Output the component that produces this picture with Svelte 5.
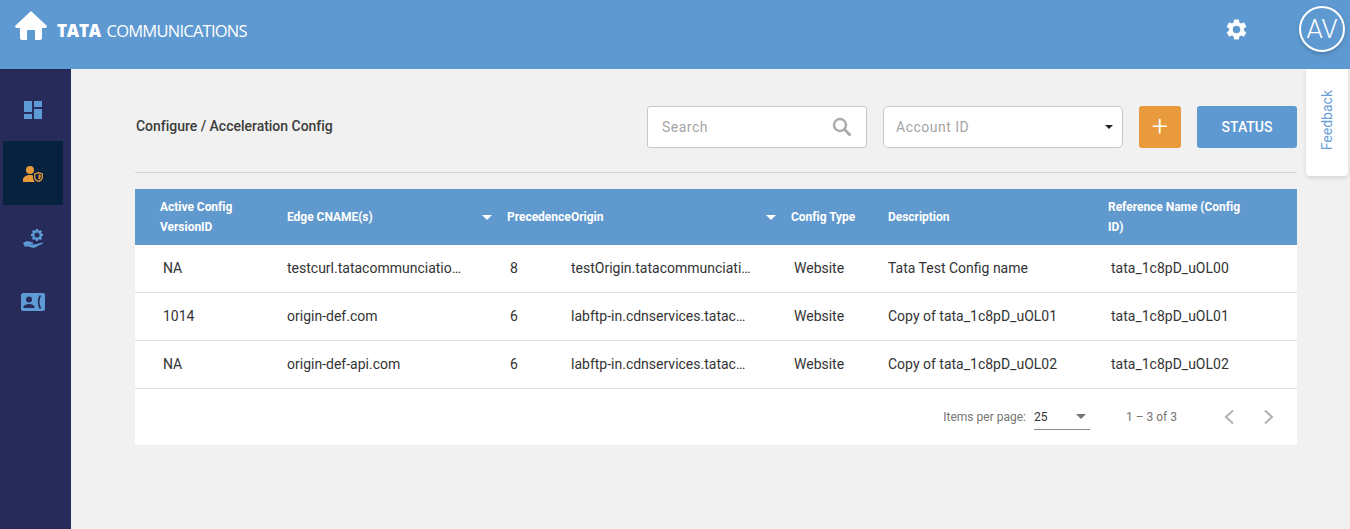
<script lang="ts">
	const rows = [
		{ version: 'NA', cname: 'testcurl.tatacommunciations.com', precedence: 8, origin: 'testOrigin.tatacommunciations.com', type: 'Website', description: 'Tata Test Config name', ref: 'tata_1c8pD_uOL00' },
		{ version: '1014', cname: 'origin-def.com', precedence: 6, origin: 'labftp-in.cdnservices.tatacommunications.com', type: 'Website', description: 'Copy of tata_1c8pD_uOL01', ref: 'tata_1c8pD_uOL01' },
		{ version: 'NA', cname: 'origin-def-api.com', precedence: 6, origin: 'labftp-in.cdnservices.tatacommunications.com', type: 'Website', description: 'Copy of tata_1c8pD_uOL02', ref: 'tata_1c8pD_uOL02' }
	];
</script>

<div class="page">
	<header class="topbar">
		<div class="brand">
			<svg class="home" viewBox="0 0 32 29" width="32" height="29">
				<path d="M16 0 L32 15 Q32 17 30 17 L27 17 L27 27 Q27 29 25 29 L20 29 L20 20 Q20 19 19 19 L13 19 Q12 19 12 20 L12 29 L7 29 Q5 29 5 27 L5 17 L2 17 Q0 17 0 15 Z" fill="#fff" />
			</svg>
			<span class="logo"><b>TATA</b> COMMUNICATIONS</span>
		</div>
		<div class="top-actions">
			<svg class="gear" viewBox="0 0 24 24" width="25" height="25">
				<path fill="#fff" d="M19.14 12.94c.04-.3.06-.61.06-.94s-.02-.64-.07-.94l2.03-1.58a.5.5 0 0 0 .12-.61l-1.92-3.32a.5.5 0 0 0-.59-.22l-2.39.96a7 7 0 0 0-1.62-.94l-.36-2.54a.48.48 0 0 0-.48-.41h-3.84a.48.48 0 0 0-.47.41l-.36 2.54c-.59.24-1.13.57-1.62.94l-2.39-.96a.49.49 0 0 0-.59.22L2.74 8.87a.48.48 0 0 0 .12.61l2.03 1.58c-.05.3-.09.63-.09.94s.02.64.07.94l-2.03 1.58a.5.5 0 0 0-.12.61l1.92 3.32c.12.22.37.29.59.22l2.39-.96c.5.38 1.03.7 1.62.94l.36 2.54c.05.24.24.41.48.41h3.84c.24 0 .44-.17.47-.41l.36-2.54c.59-.24 1.13-.56 1.62-.94l2.39.96c.22.08.47 0 .59-.22l1.92-3.32a.48.48 0 0 0-.12-.61zM12 15.6A3.6 3.6 0 1 1 12 8.4a3.6 3.6 0 0 1 0 7.2z" />
			</svg>
			<div class="avatar">AV</div>
		</div>
	</header>

	<div class="body">
		<nav class="sidebar">
			<div class="nav-item">
				<svg viewBox="0 0 18 18" width="18" height="18">
					<path fill="#5e9ad6" d="M0 0h8v11H0zM10 0h8v6h-8zM0 13h8v5H0zM10 8h8v10h-8z" />
				</svg>
			</div>
			<div class="nav-item active">
				<svg viewBox="0 0 20 16" width="20" height="16">
					<circle cx="7" cy="4" r="4" fill="#e99a3c" />
					<path fill="#e99a3c" d="M0 16v-2.500C0 11 3.500 9 7 9c1 0 2 .1 3 .4-.2 2.500.4 4.800 2 6.600z" />
					<path fill="none" stroke="#e99a3c" stroke-width="1.300" d="M15.500 6.700l3.800 1.200v2.800c0 2.300-1.700 4-3.800 4.600-2.100-.6-3.800-2.300-3.800-4.600V7.900z" />
					<path fill="#e99a3c" d="M15.500 8.300l2.200.8v1.700c0 1.500-1 2.500-2.200 3z" />
				</svg>
			</div>
			<div class="nav-item">
				<svg viewBox="0 0 20 19" width="20" height="19">
					<path fill="#5e9ad6" fill-rule="evenodd" d="M13 0h2l.3 1.300 1.100.5 1.100-.8 1.500 1.500-.8 1.100.5 1.100 1.300.3v2l-1.300.3-.5 1.100.8 1.100-1.500 1.500-1.100-.8-1.100.5-.3 1.300h-2l-.3-1.300-1.100-.5-1.100.8-1.500-1.500.8-1.100-.5-1.100-1.300-.3v-2l1.300-.3.5-1.100-.8-1.100L10.500 1l1.100.8 1.100-.5zM14 3.400a2.600 2.600 0 1 0 0 5.200 2.600 2.600 0 0 0 0-5.200z" />
					<path fill="#5e9ad6" d="M0 14c2-1.500 4-2.200 6.500-1.500l3 1c1 .3 1 1.400 0 1.400H7.500v.6H12l7-2c.9-.2 1.400.6.700 1.100L12.500 18.300c-1.400.7-2.700.7-4 .2L5.500 17.400c-1.500-.4-2.500 0-3.500.5z" />
				</svg>
			</div>
			<div class="nav-item">
				<svg viewBox="0 0 24 18" width="24" height="18">
					<rect width="24" height="18" rx="2" fill="#5e9ad6" />
					<circle cx="8" cy="6.500" r="3" fill="#262b5a" />
					<path fill="#262b5a" d="M2.500 15v-1c0-2 3.500-3 5.500-3s5.500 1 5.500 3v1z" />
					<path fill="none" stroke="#262b5a" stroke-width="1.700" d="M19.500 2.500c-2.500 3-2.500 9 0 13" />
				</svg>
			</div>
		</nav>

		<main class="content">
			<div class="toolbar">
				<div class="crumb">Configure / Acceleration Config</div>
				<div class="controls">
					<div class="field search">
						<span class="placeholder">Search</span>
						<svg viewBox="0 0 20 20" width="20" height="20">
							<circle cx="8" cy="8" r="6" fill="none" stroke="#aaa" stroke-width="2.400" />
							<path d="M12.500 12.500l6 6" stroke="#aaa" stroke-width="2.800" />
						</svg>
					</div>
					<div class="field account">
						<span class="placeholder">Account ID</span>
						<span class="select-caret"></span>
					</div>
					<button class="add">+</button>
					<button class="status">STATUS</button>
				</div>
			</div>

			<div class="table">
				<div class="row head">
					<div class="first">Active Config VersionID</div>
					<div class="sortable">Edge CNAME(s)<span class="caret"></span></div>
					<div>Precedence</div>
					<div class="sortable">Origin<span class="caret"></span></div>
					<div>Config Type</div>
					<div>Description</div>
					<div class="ref">Reference Name (Config ID)</div>
				</div>
				{#each rows as r}
					<div class="row item">
						<div class="first">{r.version}</div>
						<div class="clip">{r.cname}</div>
						<div class="inset">{r.precedence}</div>
						<div class="clip">{r.origin}</div>
						<div class="inset">{r.type}</div>
						<div>{r.description}</div>
						<div class="inset">{r.ref}</div>
					</div>
				{/each}
				<div class="paginator">
					<span class="per-label">Items per page:</span>
					<div class="per-select">
						<span>25</span>
						<span class="per-caret"></span>
					</div>
					<span class="range">1 – 3 of 3</span>
					<svg class="chev prev" viewBox="0 0 12 16" width="12" height="16">
						<path d="M10 1.500L3 8l7 6.500" fill="none" stroke="#b5b5b5" stroke-width="2.200" />
					</svg>
					<svg class="chev" viewBox="0 0 12 16" width="12" height="16">
						<path d="M2 1.500L9 8l-7 6.500" fill="none" stroke="#b5b5b5" stroke-width="2.200" />
					</svg>
				</div>
			</div>
		</main>
	</div>

	<div class="feedback"><span>Feedback</span></div>
</div>

<style>
	:global(body) {
		margin: 0;
		font-family: Roboto, sans-serif;
		overflow: hidden;
	}

	.page {
		position: relative;
		display: flex;
		flex-direction: column;
		height: 529px;
		background: #f1f1f1;
		color: #333;
	}

	.topbar {
		display: flex;
		justify-content: space-between;
		height: 69px;
		flex-shrink: 0;
		background: #5e99d1;
	}

	.brand {
		display: flex;
		align-items: center;
		height: 50px;
		padding-left: 15px;
		color: #fff;
	}

	.logo {
		margin-left: 10px;
		margin-top: 11px;
		font-family: 'Open Sans', sans-serif;
		font-size: 16.5px;
		font-weight: 500;
		letter-spacing: -0.75px;
		white-space: nowrap;
	}

	.logo b {
		font-weight: 800;
		font-size: 17px;
		letter-spacing: -0.2px;
		margin-right: 2px;
	}

	.top-actions {
		display: flex;
		align-items: flex-start;
		padding: 6px 5px 0 0;
	}

	.gear {
		margin-top: 11px;
		margin-right: 50px;
	}

	.avatar {
		box-sizing: border-box;
		display: flex;
		align-items: center;
		justify-content: center;
		width: 46px;
		height: 46px;
		border: 2px solid #fff;
		border-radius: 50%;
		color: #fff;
		font-size: 26px;
		font-weight: 300;
		box-shadow: 0 2px 4px rgba(0, 0, 0, 0.2);
	}

	.body {
		display: flex;
		flex: 1;
		min-height: 0;
	}

	.sidebar {
		width: 71px;
		flex-shrink: 0;
		box-sizing: border-box;
		padding: 8px 8px 0 3px;
		background: #262b5a;
	}

	.nav-item {
		box-sizing: border-box;
		display: flex;
		align-items: center;
		justify-content: center;
		height: 64px;
		padding-top: 2px;
	}

	.nav-item.active {
		background: #06223f;
	}

	.content {
		flex: 1;
		min-width: 0;
		padding: 37px 53px 0 64px;
	}

	.toolbar {
		display: flex;
		align-items: center;
		justify-content: space-between;
		height: 42px;
		padding-bottom: 24px;
		border-bottom: 1px solid #d6d6d6;
		margin-bottom: 16px;
	}

	.crumb {
		padding-left: 1px;
		margin-top: -2px;
		font-size: 14px;
		font-weight: 500;
		letter-spacing: -0.02px;
		color: #3c3c3c;
	}

	.controls {
		display: flex;
		align-items: center;
		gap: 16px;
	}

	.field {
		box-sizing: border-box;
		display: flex;
		align-items: center;
		justify-content: space-between;
		height: 42px;
		background: #fff;
		border: 1px solid #c8c8c8;
		border-radius: 3px;
	}

	.search {
		width: 220px;
		padding: 0 14px 0 14px;
	}

	.account {
		width: 240px;
		padding: 0 9px 0 12px;
		border-radius: 5px;
	}

	.placeholder {
		font-size: 14px;
		letter-spacing: 0.5px;
		color: #a5a5a5;
	}

	.select-caret {
		width: 0;
		height: 0;
		border-left: 4px solid transparent;
		border-right: 4px solid transparent;
		border-top: 4px solid #222;
	}

	button {
		height: 42px;
		border: 0;
		border-radius: 3px;
		color: #fff;
		font-family: inherit;
		padding: 0;
	}

	.add {
		width: 42px;
		background: #e99a3c;
		font-size: 28px;
		font-weight: 300;
		line-height: 42px;
	}

	.status {
		width: 100px;
		background: #5e99d1;
		font-size: 14px;
		font-weight: 500;
	}

	.table {
		background: #fff;
	}

	.row {
		display: grid;
		grid-template-columns: 152px 220px 64px 220px 97px 220px 189px;
		align-items: center;
	}

	.head {
		height: 56px;
		background: #6099cd;
		color: #fff;
		font-size: 12px;
		font-weight: 700;
		line-height: 20px;
		letter-spacing: -0.03px;
	}

	.head .first {
		padding-left: 25px;
		width: 90px;
	}

	.head .ref {
		padding-right: 40px;
	}

	.sortable {
		position: relative;
	}

	.caret {
		position: absolute;
		right: 15px;
		top: 8px;
		width: 0;
		height: 0;
		border-left: 5px solid transparent;
		border-right: 5px solid transparent;
		border-top: 5px solid #fff;
	}

	.item {
		box-sizing: border-box;
		height: 48px;
		padding-bottom: 1px;
		border-bottom: 1px solid #e0e0e0;
		font-size: 14px;
		color: #333;
	}

	.item .first {
		padding-left: 28px;
	}

	.inset {
		padding-left: 3px;
	}

	.clip {
		padding-right: 45px;
		min-width: 0;
		overflow: hidden;
		white-space: nowrap;
		text-overflow: ellipsis;
	}

	.item .clip + .inset + .clip {
		padding-right: 40px;
	}

	.paginator {
		display: flex;
		align-items: center;
		justify-content: flex-end;
		height: 56px;
		padding-right: 22px;
		font-size: 12px;
		color: #757575;
	}

	.per-select {
		box-sizing: border-box;
		display: flex;
		align-items: center;
		justify-content: space-between;
		width: 56px;
		height: 26px;
		margin-left: 8px;
		padding-right: 4px;
		border-bottom: 1px solid #8a8a8a;
		color: #333;
	}

	.per-caret {
		width: 0;
		height: 0;
		border-left: 5px solid transparent;
		border-right: 5px solid transparent;
		border-top: 5px solid #757575;
	}

	.range {
		margin-left: 36px;
		margin-right: 46px;
	}

	.chev.prev {
		margin-right: 28px;
	}

	.feedback {
		position: absolute;
		top: 69px;
		left: 1306px;
		box-sizing: border-box;
		width: 42px;
		height: 107px;
		padding-bottom: 4px;
		display: flex;
		align-items: center;
		justify-content: center;
		background: #fff;
		border-radius: 0 0 4px 4px;
		box-shadow: 0 2px 4px rgba(0, 0, 0, 0.12);
		color: #6a9fd6;
		font-size: 14px;
	}

	.feedback span {
		writing-mode: vertical-rl;
		transform: rotate(180deg);
	}
</style>
